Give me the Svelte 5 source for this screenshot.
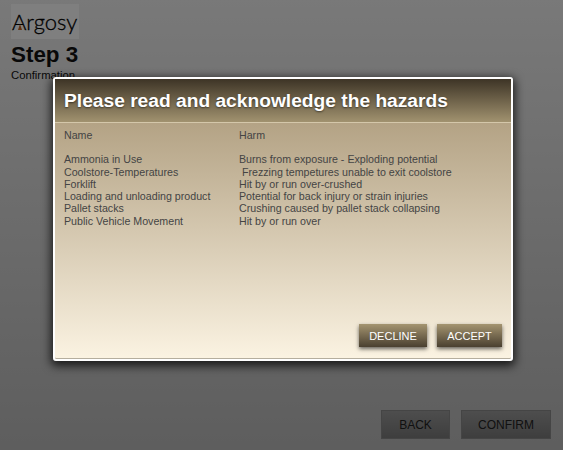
<script>
  const hazards = [
    { name: 'Ammonia in Use', harm: 'Burns from exposure - Exploding potential' },
    { name: 'Coolstore-Temperatures', harm: '\u00a0Frezzing tempetures unable to exit coolstore' },
    { name: 'Forklift', harm: 'Hit by or run over-crushed' },
    { name: 'Loading and unloading product', harm: 'Potential for back injury or strain injuries' },
    { name: 'Pallet stacks', harm: 'Crushing caused by pallet stack collapsing' },
    { name: 'Public Vehicle Movement', harm: 'Hit by or run over' }
  ];
</script>

<div class="page">
  <header class="top">
    <div class="logo">
      <span class="logo-text">Argosy</span>
      <span class="logo-mark"></span>
    </div>
    <h1>Step 3</h1>
    <p>Confirmation</p>
  </header>

  <div class="nav-buttons">
    <button class="nav back" type="button">BACK</button>
    <button class="nav confirm" type="button">CONFIRM</button>
  </div>

  <div class="overlay"></div>

  <section class="modal" role="dialog" aria-modal="true" aria-labelledby="modal-title">
    <div class="modal-header">
      <h2 id="modal-title">Please read and acknowledge the hazards</h2>
    </div>
    <div class="modal-body">
      <div class="row head">
        <span>Name</span>
        <span>Harm</span>
      </div>
      {#each hazards as h}
        <div class="row">
          <span>{h.name}</span>
          <span>{h.harm}</span>
        </div>
      {/each}
    </div>
    <div class="modal-actions">
      <button class="action" type="button">DECLINE</button>
      <button class="action accept" type="button">ACCEPT</button>
    </div>
  </section>
</div>

<style>
  :global(body) {
    margin: 0;
    font-family: "Liberation Sans", Arial, sans-serif;
  }

  .page {
    position: relative;
    width: 563px;
    height: 450px;
    overflow: hidden;
    background: linear-gradient(#f2f2f2, #bcbcbc);
  }

  .top {
    padding: 4px 0 0 11px;
    color: #111;
  }

  .logo {
    position: relative;
    width: 68px;
    height: 35px;
    background: #fff;
  }

  .logo-text {
    display: block;
    padding-left: 1px;
    font-family: Lato, sans-serif;
    font-weight: 300;
    font-size: 22px;
    line-height: 35px;
    color: #000;
    -webkit-text-stroke: 0.3px #000;
  }

  .logo-mark {
    position: absolute;
    left: 7px;
    top: 20px;
    width: 0;
    height: 0;
    border-left: 2px solid transparent;
    border-right: 2px solid transparent;
    border-bottom: 6px solid #c8641e;
  }

  h1 {
    margin: 3px 0 0;
    font-size: 22.4px;
    line-height: 26px;
    font-weight: bold;
  }

  .top p {
    margin: 0;
    font-size: 11.3px;
    line-height: 14px;
  }

  .nav-buttons {
    position: absolute;
    right: 12px;
    bottom: 11px;
    display: flex;
    gap: 11px;
  }

  .nav {
    height: 29px;
    padding: 0;
    border: 1px solid #8a8a8a;
    background: linear-gradient(#9c9c9c, #7c7c7c);
    color: #222;
    font: 12px "Liberation Sans", Arial, sans-serif;
  }

  .back { width: 69px; }
  .confirm { width: 90px; }

  .overlay {
    position: absolute;
    inset: 0;
    background: rgba(0, 0, 0, 0.5);
  }

  .modal {
    position: absolute;
    left: 53px;
    top: 77px;
    box-sizing: border-box;
    width: 460px;
    height: 284px;
    border: 2px solid #fff;
    border-radius: 3px;
    display: flex;
    flex-direction: column;
    background: linear-gradient(#b3a284 15%, #fbf3e2 100%);
    box-shadow: 0 3px 10px 2px rgba(0, 0, 0, 0.75), inset 0 -1px 0 #b5ae9e;
  }

  .modal-header {
    height: 43px;
    display: flex;
    align-items: center;
    padding-left: 9px;
    background: linear-gradient(#3d3426, #a1926f);
    border-bottom: 1px solid #d4c7aa;
  }

  .modal-header h2 {
    margin: 0;
    color: #fff;
    font-size: 19.2px;
    font-weight: bold;
    text-shadow: 0 1px 2px rgba(0, 0, 0, 0.5);
  }

  .modal-body {
    flex: 1;
    padding: 6px 9px 0;
    font-size: 10.67px;
    line-height: 12.3px;
    color: #444;
  }

  .row {
    display: grid;
    grid-template-columns: 175px 1fr;
  }

  .head {
    margin-bottom: 12px;
  }

  .modal-actions {
    display: flex;
    justify-content: flex-end;
    gap: 10px;
    padding: 0 9px 12px;
  }

  .action {
    width: 68px;
    height: 23px;
    padding: 0;
    border: none;
    background: linear-gradient(#a49470, #4a4030);
    color: #fff;
    font: 11px "Liberation Sans", Arial, sans-serif;
    box-shadow: 0 2px 4px rgba(0, 0, 0, 0.6);
  }

  .accept {
    width: 65px;
  }
</style>
